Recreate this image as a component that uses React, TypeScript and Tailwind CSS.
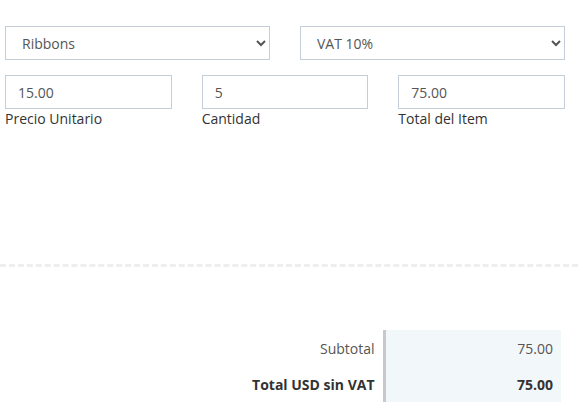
import React from "react";

export default function App() {
  const font = { fontFamily: '"Open Sans", "Liberation Sans", sans-serif' };
  return (
    <div className="w-[578px] h-[417px] bg-white text-[14px] text-[#333]" style={font}>
      <div className="pl-[5px] pr-[13px] pt-[26px]">
        <div className="grid grid-cols-2 gap-x-[30px]">
          <select
            defaultValue="Ribbons"
            className="h-[34px] border border-[#c5cdd9] bg-white px-3 text-[14px] text-[#555] outline-none"
            style={font}
          >
            <option>Ribbons</option>
          </select>
          <select
            defaultValue="VAT 10%"
            className="h-[34px] border border-[#c5cdd9] bg-white px-3 text-[14px] text-[#555] outline-none"
            style={font}
          >
            <option>VAT 10%</option>
          </select>
        </div>
        <div className="mt-[15px] grid grid-cols-3 gap-x-[30px]">
          {[
            ["15.00", "Precio Unitario"],
            ["5", "Cantidad"],
            ["75.00", "Total del Item"],
          ].map(([v, l]) => (
            <div key={l} className="flex flex-col">
              <input
                defaultValue={v}
                className="h-[34px] w-full border border-[#c5cdd9] bg-white px-3 text-[14px] text-[#555] outline-none"
                style={font}
              />
              <span className="leading-[20px] text-[#333]">{l}</span>
            </div>
          ))}
        </div>
      </div>
      <div className="mt-[135px] border-t-[3px] border-dashed border-[#eeeeee]" />
      <div className="mt-[63px] flex justify-end pr-[17px]">
        <table className="border-collapse text-[14px]">
          <tbody>
            <tr className="h-[36px]">
              <td className="pr-[8px] text-right text-[#555]">Subtotal</td>
              <td className="w-[177px] border-l-[3px] border-[#c8c8c8] bg-[#f2f7fa] pr-[8px] text-right text-[#555]">
                75.00
              </td>
            </tr>
            <tr className="h-[36px]">
              <td className="pr-[8px] text-right font-bold text-[#333]">Total USD sin VAT</td>
              <td className="w-[177px] border-l-[3px] border-[#c8c8c8] bg-[#f2f7fa] pr-[8px] text-right font-bold text-[#333]">
                75.00
              </td>
            </tr>
          </tbody>
        </table>
      </div>
    </div>
  );
}
